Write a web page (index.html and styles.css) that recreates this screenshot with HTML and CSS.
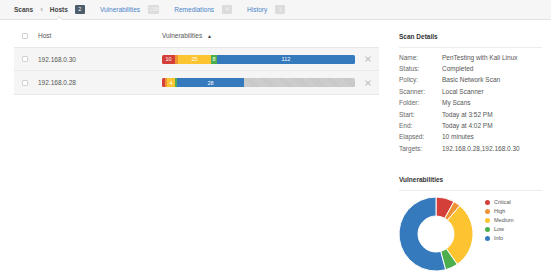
FILE: index.html
```html
<!DOCTYPE html>
<html>
<head>
<meta charset="utf-8">
<link rel="stylesheet" href="styles.css">
</head>
<body>
<div class="topbar">
  <span class="crumb">Scans</span>
  <span class="chev">&#8250;</span>
  <span class="crumb active">Hosts<span class="badge dark">2</span></span>
  <span class="tab">Vulnerabilities<span class="badge">158</span></span>
  <span class="tab">Remediations<span class="badge">4</span></span>
  <span class="tab">History<span class="badge">1</span></span>
</div>
<div class="main">
  <div class="table">
    <div class="row head">
      <span class="cb"></span>
      <span class="host">Host</span>
      <span class="vcol">Vulnerabilities <span class="arrow">&#9650;</span></span>
    </div>
    <div class="row body sep">
      <span class="cb"></span>
      <span class="host">192.168.0.30</span>
      <div class="bar">
        <span class="seg crit" style="width:13px">10</span>
        <span class="seg high" style="width:3px"></span>
        <span class="seg med" style="width:33px">25</span>
        <span class="seg low" style="width:6px">8</span>
        <span class="seg info" style="flex:1">112</span>
      </div>
      <span class="del"><svg width="6" height="6" viewBox="0 0 6 6"><path d="M0.5 0.5L5.5 5.5M5.5 0.5L0.5 5.5" stroke="#c4c4c4" stroke-width="1.1"/></svg></span>
    </div>
    <div class="row body">
      <span class="cb"></span>
      <span class="host">192.168.0.28</span>
      <div class="bar">
        <span class="seg crit" style="width:3px"></span>
        <span class="seg high" style="width:2px"></span>
        <span class="seg med" style="width:8px">4</span>
        <span class="seg low" style="width:2px"></span>
        <span class="seg info" style="width:67px">28</span>
        <span class="seg rest"></span>
      </div>
      <span class="del"><svg width="6" height="6" viewBox="0 0 6 6"><path d="M0.5 0.5L5.5 5.5M5.5 0.5L0.5 5.5" stroke="#c4c4c4" stroke-width="1.1"/></svg></span>
    </div>
  </div>
  <div class="side">
    <div class="heading">Scan Details</div>
    <div class="details">
      <div class="drow"><span class="lbl">Name:</span><span>PenTesting with Kali Linux</span></div>
      <div class="drow"><span class="lbl">Status:</span><span>Completed</span></div>
      <div class="drow"><span class="lbl">Policy:</span><span>Basic Network Scan</span></div>
      <div class="drow"><span class="lbl">Scanner:</span><span>Local Scanner</span></div>
      <div class="drow"><span class="lbl">Folder:</span><span>My Scans</span></div>
      <div class="drow"><span class="lbl">Start:</span><span>Today at 3:52 PM</span></div>
      <div class="drow"><span class="lbl">End:</span><span>Today at 4:02 PM</span></div>
      <div class="drow"><span class="lbl">Elapsed:</span><span>10 minutes</span></div>
      <div class="drow"><span class="lbl">Targets:</span><span>192.168.0.28,192.168.0.30</span></div>
    </div>
    <div class="heading vh">Vulnerabilities</div>
    <div class="chart">
      <svg class="donut" width="76" height="76" viewBox="0 0 76 76">
        <g stroke="#fff" stroke-width="1">
          <path fill="#d43f3a" d="M38 1 A37 37 0 0 1 55.94 5.64 L46.73 22.26 A18 18 0 0 0 38 20 Z"/>
          <path fill="#ee9336" d="M55.94 5.64 A37 37 0 0 1 61.78 9.66 L49.57 24.21 A18 18 0 0 0 46.73 22.26 Z"/>
          <path fill="#fdc431" d="M61.78 9.66 A37 37 0 0 1 59.22 68.31 L48.32 52.75 A18 18 0 0 0 49.57 24.21 Z"/>
          <path fill="#4cae4c" d="M59.22 68.31 A37 37 0 0 1 47.58 73.74 L42.66 55.39 A18 18 0 0 0 48.32 52.75 Z"/>
          <path fill="#357abd" d="M47.58 73.74 A37 37 0 1 1 38 1 L38 20 A18 18 0 1 0 42.66 55.39 Z"/>
        </g>
      </svg>
      <div class="legend">
        <div class="li"><span class="dot crit"></span>Critical</div>
        <div class="li"><span class="dot high"></span>High</div>
        <div class="li"><span class="dot med"></span>Medium</div>
        <div class="li"><span class="dot low"></span>Low</div>
        <div class="li"><span class="dot info"></span>Info</div>
      </div>
    </div>
  </div>
</div>
</body>
</html>
```
FILE: styles.css
```css
html, body {
  margin: 0;
  padding: 0;
  background: #fff;
  font-family: "Liberation Sans", Arial, sans-serif;
  font-size: 6.5px;
  color: #555;
}
.topbar {
  height: 19px;
  background: #f6f6f6;
  border-bottom: 1px solid #e2e2e2;
  display: flex;
  align-items: center;
  padding-left: 14px;
  box-sizing: content-box;
}
.crumb {
  font-weight: bold;
  color: #444;
  display: flex;
  align-items: center;
  position: relative;
}
.crumb.active::after {
  content: "";
  position: absolute;
  left: 7px;
  top: 12px;
  width: 4px;
  height: 4px;
  background: #fff;
  border-left: 1px solid #e2e2e2;
  border-top: 1px solid #e2e2e2;
  transform: rotate(45deg);
}
.chev {
  color: #888;
  margin: 0 7px 0 7px;
  font-size: 8px;
}
.tab {
  color: #4a84c8;
  display: flex;
  align-items: center;
  margin-left: 15px;
}
.badge {
  display: inline-block;
  min-width: 10px;
  height: 9px;
  line-height: 9px;
  padding: 0 1px;
  box-sizing: border-box;
  text-align: center;
  font-size: 5.5px;
  font-weight: normal;
  background: #dcdcdc;
  color: #f2f2f2;
  margin-left: 8px;
  border-radius: 1px;
}
.badge.dark {
  background: #4e5d6c;
  color: #fff;
  margin-left: 7px;
}
.main {
  display: flex;
  align-items: flex-start;
}
.table {
  margin-left: 14px;
  margin-top: 4px;
  width: 365px;
  border-bottom: 1px solid #e8e8e8;
}
.row {
  display: flex;
  align-items: center;
  height: 23px;
  position: relative;
}
.row.head {
  border-bottom: 1px solid #e8e8e8;
  color: #555;
}
.row.body {
  background: #f5f5f5;
}
.row.sep {
  border-bottom: 1px dotted #dedede;
  height: 22px;
}
.cb {
  width: 6px;
  height: 6px;
  border: 1px solid #d2d2d2;
  background: #fff;
  margin-left: 8px;
  box-sizing: border-box;
  border-radius: 1px;
}
.host {
  margin-left: 10px;
  width: 124px;
}
.vcol {
  margin-left: 0;
}
.arrow {
  font-size: 5px;
  margin-left: 3px;
  color: #444;
}
.bar {
  display: flex;
  width: 193px;
  height: 9px;
  border-radius: 1.5px;
  overflow: hidden;
}
.seg {
  display: flex;
  align-items: center;
  justify-content: center;
  color: #fff;
  font-size: 5.5px;
  height: 100%;
}
.crit { background: #d43f3a; }
.high { background: #ee9336; }
.med { background: #fdc431; }
.low { background: #4cae4c; }
.info { background: #357abd; }
.rest {
  flex: 1;
  background: repeating-linear-gradient(45deg, #cfcfcf 0 1px, #c6c6c6 1px 2px);
}
.del {
  margin-left: 10px;
  display: flex;
}
.side {
  margin-left: 20px;
  width: 143px;
  padding-top: 12px;
}
.heading {
  font-weight: bold;
  color: #333;
  line-height: 10px;
  padding-bottom: 5px;
  border-bottom: 1px solid #ececec;
}
.details {
  margin-top: 3.5px;
}
.drow {
  display: flex;
  line-height: 11.4px;
  color: #555;
}
.lbl {
  width: 43px;
  color: #666;
}
.heading.vh {
  margin-top: 21px;
}
.chart {
  display: flex;
  align-items: flex-start;
  margin-top: 5px;
}
.donut {
  margin-left: -1px;
  display: block;
}
.legend {
  margin-left: 11px;
  margin-top: 2px;
}
.li {
  display: flex;
  align-items: center;
  line-height: 9px;
  color: #555;
  font-size: 5.5px;
}
.dot {
  width: 5px;
  height: 5px;
  border-radius: 50%;
  margin-right: 4px;
}
```
